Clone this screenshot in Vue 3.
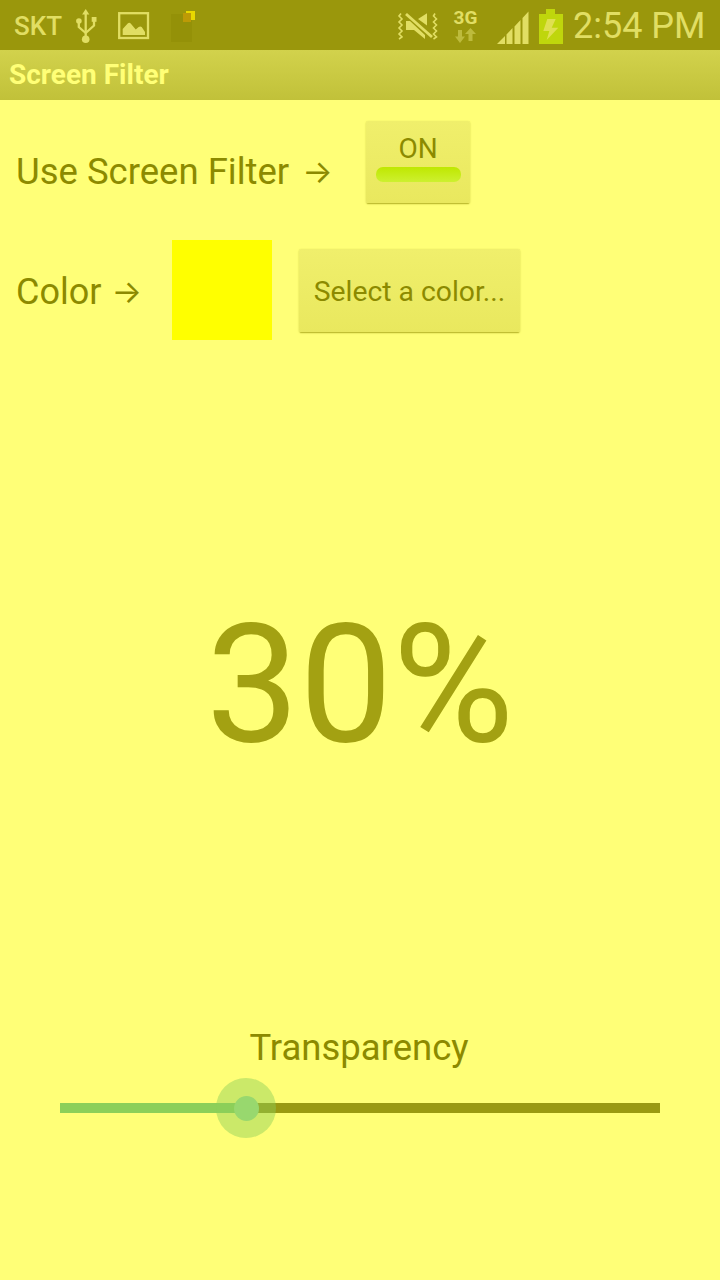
<script setup>
const progress = 31
</script>

<template>
  <div class="screen">
    <header class="status">
      <span class="carrier">SKT</span>
      <svg class="i-usb" width="22" height="36" viewBox="0 0 22 36">
        <g fill="none" stroke="#e1de63" stroke-width="2.300">
          <path d="M9.700 4v26"/>
          <path d="M2.800 13v5L9.700 24"/>
          <path d="M18 12v4.500L9.700 24"/>
        </g>
        <path d="M9.700 0l3.600 5.500H6.100z" fill="#e1de63"/>
        <circle cx="9.700" cy="30.300" r="3.800" fill="#e1de63"/>
        <circle cx="2.900" cy="12" r="2.800" fill="#e1de63"/>
        <rect x="15.700" y="8" width="4.800" height="4.800" fill="#e1de63"/>
      </svg>
      <svg class="i-pic" width="32" height="28" viewBox="0 0 32 28">
        <rect x="1.200" y="1.200" width="28.800" height="24.800" fill="none" stroke="#e1de63" stroke-width="2.300"/>
        <path d="M4.700 23v-6l5-5.500q1.600-1.500 3 0l5 6 3-2.500q1.500-1 3 0L27 20v3z" fill="#e1de63"/>
      </svg>
      <svg class="i-sd" width="25" height="31" viewBox="0 0 25 31">
        <rect x="1" y="3" width="21" height="28" fill="#949108"/>
        <rect x="16" y="0" width="9" height="9" fill="#e8d800"/>
        <rect x="13" y="2" width="8" height="9" fill="#bd9a06"/>
      </svg>
      <div class="spacer"></div>
      <svg class="i-mute" width="42" height="28" viewBox="0 0 42 28">
        <path d="M4 0.500L2 3l3 3-3 3 3 3-3 3 3 3-3 3 3 3-3 2M38 0.500L36.500 3l3 3-3 3 3 3-3 3 3 3-3 3 3 3-3 2" fill="none" stroke="#e1de63" stroke-width="1.600"/>
        <path d="M9 1l26 23" fill="none" stroke="#e1de63" stroke-width="2.800"/>
        <path d="M21 6l9-5.700V12.500zM9 8h4l15 14v4L17 17H9z" fill="#e1de63"/>
      </svg>
      <div class="net">
        <span class="three-g">3G</span>
        <svg width="21" height="15" viewBox="0 0 21 15">
          <path d="M5 15L0 8.500h3V2h4v6.500h3zM15.500 0L21 6h-3.500v7h-4V6H10z" fill="#bdbb3c"/>
        </svg>
      </div>
      <svg class="i-signal" width="32" height="34" viewBox="0 0 32 34">
        <path d="M0 33L8 25v8zM9.500 23.500L15.500 17v16h-6zM17.500 15.500L23.500 9v24h-6zM25.500 7L31.500 0.500V33h-6z" fill="#e1de63"/>
      </svg>
      <svg class="i-bat" width="24" height="35" viewBox="0 0 24 35">
        <path d="M7 0h9v5h8v30H0V5h7z" fill="#bfd60c"/>
        <path d="M8.300 10h8.400l-4 8.700h6.600L7.700 31l2.600-9h-6z" fill="#dfe050"/>
      </svg>
      <span class="time">2:54 PM</span>
    </header>

    <div class="actionbar">Screen Filter</div>

    <main class="content">
      <div class="row-on">
        <span class="label">Use Screen Filter<span class="arrow">→</span></span>
        <button class="btn toggle">
          <span>ON</span>
          <i class="lamp"></i>
        </button>
      </div>

      <div class="row-color">
        <span class="label">Color<span class="arrow">→</span></span>
        <div class="swatch"></div>
        <button class="btn pick">Select a color...</button>
      </div>

      <div class="percent">30%</div>

      <div class="caption">Transparency</div>
      <div class="slider">
        <div class="fill" :style="{ width: progress + '%' }"></div>
        <div class="thumb" :style="{ left: progress + '%' }"><i></i></div>
      </div>
    </main>
  </div>
</template>

<style>
html, body { margin: 0; background: #ffff77; }
</style>

<style scoped>
.screen {
  width: 720px;
  height: 1280px;
  background: #ffff77;
  font-family: Roboto, "Liberation Sans", sans-serif;
  color: #8c8a00;
  overflow: hidden;
  display: flex;
  flex-direction: column;
}
.status {
  height: 50px;
  flex: none;
  background: #9a970c;
  display: flex;
  align-items: flex-start;
  padding: 0 15px 0 14px;
  box-sizing: border-box;
  color: #e1de63;
}
.status svg { display: block; flex: none; }
.carrier { font-size: 26px; font-weight: 500; width: 46px; line-height: 50px; margin-top: 1px; }
.i-usb { margin: 9px 0 0 16px; }
.i-pic { margin: 12px 0 0 20px; }
.i-sd { margin: 11px 0 0 20px; }
.spacer { flex: 1; }
.i-mute { margin-top: 13px; }
.net {
  width: 25px;
  margin: 10px 0 0 14px;
  display: flex;
  flex-direction: column;
  align-items: center;
  gap: 3px;
}
.three-g { font-size: 19px; font-weight: 700; line-height: 15px; }
.i-signal { margin: 11px 0 0 19px; }
.i-bat { margin: 9px 0 0 10px; }
.time { margin: 1px 0 0 10px; width: 132px; font-size: 36px; font-weight: 400; line-height: 50px; white-space: nowrap; }

.actionbar {
  height: 50px;
  flex: none;
  box-sizing: border-box;
  background: linear-gradient(#d2d24c, #c1c139);
  color: #ffff77;
  font-size: 28px;
  font-weight: 700;
  line-height: 50px;
  padding-left: 9px;
}
.content { flex: 1; display: flex; flex-direction: column; }
.label { font-size: 36.500px; line-height: 44px; white-space: nowrap; }
.arrow {
  font-family: Inter, sans-serif;
  font-size: 32px;
  margin-left: 13px;
  vertical-align: 1px;
}
.btn {
  font-family: inherit;
  color: #8c8a00;
  border: 0;
  padding: 0;
  border-radius: 2px;
  background: linear-gradient(#f0ef6c, #e9e85e);
  box-shadow: 0 0 1px #dede5c, 0 2px 1px -1px #bbb92c, 0 1px 2px #d8d750;
}
.row-on {
  display: flex;
  align-items: center;
  margin-top: 21px;
  height: 82px;
  padding-left: 16px;
}
.row-on .label { width: 315px; padding-top: 20px; }
.toggle {
  width: 104px;
  height: 82px;
  margin-left: 35px;
  font-size: 28px;
  display: flex;
  flex-direction: column;
  align-items: center;
  padding-top: 12px;
  box-sizing: border-box;
}
.toggle span { line-height: 32px; }
.lamp {
  display: block;
  width: 85px;
  height: 15px;
  margin-top: 2px;
  border-radius: 7px;
  background: linear-gradient(#bfe800, #cdf030);
}
.row-color {
  display: flex;
  align-items: center;
  margin-top: 37px;
  height: 100px;
  padding-left: 16px;
}
.swatch { width: 100px; height: 100px; margin-left: 30px; background: #ffff00; flex: none; }
.row-color .label { width: 126px; padding-top: 4px; font-size: 36px; }
.row-color .arrow { margin-left: 10px; }
.pick {
  width: 221px;
  height: 83px;
  margin-left: 27px;
  padding-top: 2px;
  font-size: 28.300px;
}
.percent {
  margin-top: 245px;
  height: 200px;
  line-height: 200px;
  text-align: center;
  font-size: 166px;
  color: #a3a112;
}
.caption {
  margin-top: 241px;
  text-align: center;
  font-size: 36.500px;
  line-height: 44px;
  margin-left: -2px;
}
.slider {
  position: relative;
  height: 10px;
  margin: 33px 60px 0;
  background: #9a9a12;
}
.fill { height: 100%; background: #8ccf59; }
.thumb {
  position: absolute;
  top: 5px;
  width: 60px;
  height: 60px;
  margin: -30px 0 0 -30px;
  border-radius: 50%;
  background: rgba(140, 207, 89, 0.45);
  display: flex;
  align-items: center;
  justify-content: center;
}
.thumb i {
  width: 25px;
  height: 25px;
  border-radius: 50%;
  background: #98d86e;
}
</style>
